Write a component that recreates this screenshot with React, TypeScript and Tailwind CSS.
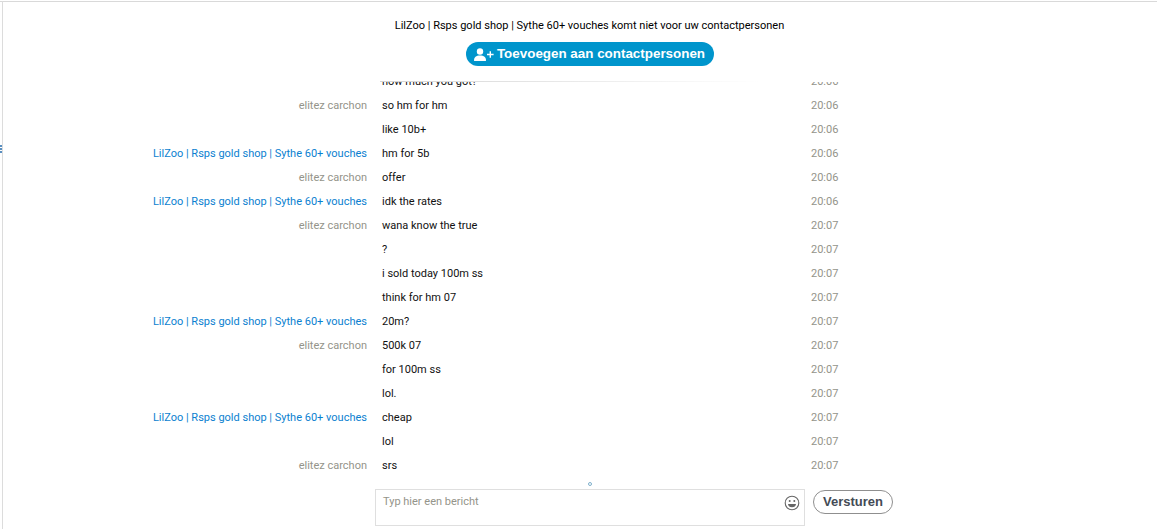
const NAME_LIL = "LilZoo | Rsps gold shop | Sythe 60+ vouches";
const NAME_EL = "elitez carchon";

const MESSAGES: { name?: string; text: string; time: string }[] = [
  { text: "how much you got?", time: "20:06" },
  { name: NAME_EL, text: "so hm for hm", time: "20:06" },
  { text: "like 10b+", time: "20:06" },
  { name: NAME_LIL, text: "hm for 5b", time: "20:06" },
  { name: NAME_EL, text: "offer", time: "20:06" },
  { name: NAME_LIL, text: "idk the rates", time: "20:06" },
  { name: NAME_EL, text: "wana know the true", time: "20:07" },
  { text: "?", time: "20:07" },
  { text: "i sold today 100m ss", time: "20:07" },
  { text: "think for hm 07", time: "20:07" },
  { name: NAME_LIL, text: "20m?", time: "20:07" },
  { name: NAME_EL, text: "500k 07", time: "20:07" },
  { text: "for 100m ss", time: "20:07" },
  { text: "lol.", time: "20:07" },
  { name: NAME_LIL, text: "cheap", time: "20:07" },
  { text: "lol", time: "20:07" },
  { name: NAME_EL, text: "srs", time: "20:07" },
];

function AddContactIcon() {
  return (
    <svg width="20" height="13" viewBox="0 0 20 13" fill="white">
      <circle cx="6" cy="3.500" r="3.200" />
      <path d="M0 12.500c0-3.200 2-5 6-5s6 1.800 6 5c0 .4-.3.500-.6.500H.6c-.3 0-.6-.1-.6-.5z" />
      <path d="M13 5.800h2.600V3.200h1.400v2.600h2.600v1.400H17v2.600h-1.400V7.200H13z" />
    </svg>
  );
}

function SmileyIcon() {
  return (
    <svg width="16" height="16" viewBox="0 0 16 16" fill="none">
      <circle cx="8" cy="8" r="6.800" stroke="#666" strokeWidth="1.100" />
      <circle cx="5.700" cy="6" r="1" fill="#666" />
      <circle cx="10.300" cy="6" r="1" fill="#666" />
      <path d="M4 9h8c0 2-1.800 3.300-4 3.300S4 11 4 9z" fill="#666" />
    </svg>
  );
}

function MessageRow({ name, text, time }: { name?: string; text: string; time: string }) {
  return (
    <div className="flex h-6 items-center">
      <div
        className={`w-[367px] shrink-0 text-right ${
          name === NAME_LIL ? "text-[#0b7fd0]" : "text-[#94948a]"
        }`}
      >
        {name}
      </div>
      <div className="ml-[15px] w-[429px] shrink-0 text-[#111]">{text}</div>
      <div className="text-[#94948a]">{time}</div>
    </div>
  );
}

export default function App() {
  return (
    <div className="relative flex h-[529px] w-[1157px] flex-col overflow-hidden bg-white font-['Roboto','Liberation_Sans',sans-serif] text-[11px]">
      <div className="mt-px h-px w-[1157px] shrink-0 bg-[#d9d9d9]" />

      {/* left edge of the window */}
      <div className="absolute left-[2px] top-[1px] h-[528px] w-px bg-[#dcdcdc]" />
      <div className="absolute left-0 top-[145px] flex flex-col gap-px">
        <span className="h-[2px] w-[2px] bg-[#5a8fc0]" />
        <span className="h-[2px] w-[2px] bg-[#5a8fc0]" />
        <span className="h-[2px] w-[2px] bg-[#5a8fc0]" />
      </div>

      <div className="flex h-[79px] shrink-0 flex-col items-center">
        <div className="mt-[16px] ml-[22px] h-[16px] leading-[16px] text-black">
          LilZoo | Rsps gold shop | Sythe 60+ vouches komt niet voor uw contactpersonen
        </div>
        <div className="mt-[8px] ml-[23px] flex h-6 w-[248px] items-center justify-center gap-[3px] rounded-full bg-[#0095cc] pr-[1px] font-['Liberation_Sans',sans-serif] text-[13.400px] font-bold text-white">
          <AddContactIcon />
          <span>Toevoegen aan contactpersonen</span>
        </div>
      </div>

      <div className="ml-[380px] h-px w-[380px] shrink-0 bg-gradient-to-r from-[#d4d4d4] to-white" />

      <div className="h-[395px] shrink-0 overflow-hidden">
        <div className="-mt-[12px]">
          {MESSAGES.map((m, i) => (
            <MessageRow key={i} name={m.name} text={m.text} time={m.time} />
          ))}
        </div>
      </div>

      <div className="relative flex flex-1 items-start pl-[375px] pt-[12px]">
        <span className="absolute left-[588px] top-[5px] h-1 w-1 rounded-full border border-[#7fb0cc]" />
        <div className="flex h-[37px] w-[430px] justify-between border border-[#dfdfdf] pl-[7px] pr-[4px]">
          <span className="mt-[4px] text-[#94948a]">Typ hier een bericht</span>
          <span className="mt-[5px]">
            <SmileyIcon />
          </span>
        </div>
        <div className="ml-[8px] mt-px flex h-[24px] w-[80px] items-center justify-center rounded-full border border-[#8f8f8f] font-['Liberation_Sans',sans-serif] text-[13px] font-bold text-[#444b55]">
          Versturen
        </div>
      </div>
    </div>
  );
}
